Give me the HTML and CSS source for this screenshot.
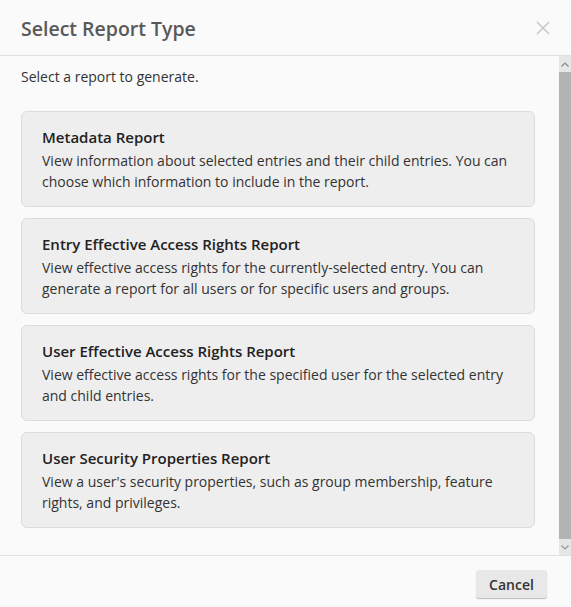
FILE: index.html
```html
<!DOCTYPE html>
<html lang="en">
<head>
  <meta charset="UTF-8" />
  <meta name="viewport" content="width=device-width, initial-scale=1.0"/>
  <title>Select Report Type</title>
  <link rel="stylesheet" href="styles.css">
</head>
<body>
  <div class="dialog">
    <div class="dialog-header">
      <h1 class="dialog-title">Select Report Type</h1>
      <button class="close-btn" aria-label="Close">
        <svg width="14" height="14" viewBox="0 0 14 14"><path d="M1 1L13 13M13 1L1 13" stroke="#c8c8c8" stroke-width="1.6" fill="none"/></svg>
      </button>
    </div>
    <div class="dialog-body">
      <div class="body-content">
        <p class="intro">Select a report to generate.</p>
        <div class="report-list">
          <div class="report-card">
            <div class="report-name">Metadata Report</div>
            <div class="report-desc">View information about selected entries and their child entries. You can choose which information to include in the report.</div>
          </div>
          <div class="report-card">
            <div class="report-name">Entry Effective Access Rights Report</div>
            <div class="report-desc">View effective access rights for the currently-selected entry. You can generate a report for all users or for specific users and groups.</div>
          </div>
          <div class="report-card">
            <div class="report-name">User Effective Access Rights Report</div>
            <div class="report-desc">View effective access rights for the specified user for the selected entry and child entries.</div>
          </div>
          <div class="report-card">
            <div class="report-name">User Security Properties Report</div>
            <div class="report-desc">View a user's security properties, such as group membership, feature rights, and privileges.</div>
          </div>
        </div>
      </div>
      <div class="scrollbar">
        <div class="scroll-btn">
          <svg width="8" height="5" viewBox="0 0 8 5"><path d="M0.5 4.5L4 1L7.5 4.5" stroke="#888" stroke-width="1.2" fill="none"/></svg>
        </div>
        <div class="scroll-thumb"></div>
        <div class="scroll-btn">
          <svg width="8" height="5" viewBox="0 0 8 5"><path d="M0.5 0.5L4 4L7.5 0.5" stroke="#999" stroke-width="1.2" fill="none"/></svg>
        </div>
      </div>
    </div>
    <div class="dialog-footer">
      <button class="cancel-btn">Cancel</button>
    </div>
  </div>
</body>
</html>
```

FILE: styles.css
```css
body {
  margin: 0;
  padding: 0;
  background-color: #fafafa;
  font-family: "Open Sans", Arial, sans-serif;
  color: #333;
}
.dialog {
  display: flex;
  flex-direction: column;
  height: 607px;
  background-color: #fafafa;
}
.dialog-header {
  display: flex;
  align-items: center;
  justify-content: space-between;
  height: 55px;
  padding: 0 20px 0 21px;
  border-bottom: 1px solid #e0e0e0;
  flex-shrink: 0;
}
.dialog-title {
  margin: 0;
  font-size: 19.5px;
  font-weight: 600;
  color: #595959;
  padding-top: 2px;
}
.close-btn {
  background: none;
  border: none;
  padding: 0;
  width: 16px;
  height: 16px;
  display: flex;
  align-items: center;
  justify-content: center;
  cursor: pointer;
}
.dialog-body {
  display: flex;
  height: 499px;
  flex-shrink: 0;
}
.body-content {
  flex: 1;
  padding: 10px 24px 0 21px;
}
.intro {
  margin: 0 0 24px;
  font-size: 14px;
  line-height: 21px;
  color: #333;
}
.report-list {
  display: flex;
  flex-direction: column;
  gap: 11px;
}
.report-card {
  background-color: #eeeeee;
  border: 1px solid #dcdcdc;
  border-radius: 6px;
  padding: 15px 20px 14px;
}
.report-name {
  font-size: 15px;
  font-weight: 600;
  line-height: 21px;
  color: #222;
  margin-bottom: 2px;
}
.report-desc {
  font-size: 14px;
  line-height: 21px;
  color: #333;
}
.scrollbar {
  width: 12px;
  display: flex;
  flex-direction: column;
  background-color: #e6e6e6;
}
.scroll-btn {
  height: 16px;
  display: flex;
  align-items: center;
  justify-content: center;
  background-color: #e6e6e6;
}
.scroll-thumb {
  flex: 1;
  background-color: #b3b3b3;
}
.dialog-footer {
  display: flex;
  justify-content: flex-end;
  align-items: flex-start;
  flex: 1;
  padding: 14px 24px 0;
  border-top: 1px solid #e0e0e0;
}
.cancel-btn {
  width: 71px;
  height: 28px;
  font-family: "Open Sans", Arial, sans-serif;
  font-size: 14px;
  font-weight: 600;
  color: #333;
  background-color: #e8e8e8;
  border: none;
  border-radius: 3px;
  box-shadow: 0 1px 1px rgba(0, 0, 0, 0.25);
  cursor: pointer;
}
```
